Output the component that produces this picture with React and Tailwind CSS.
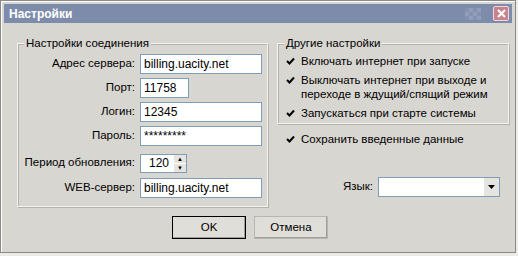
import { useState } from "react";

const font = { fontFamily: '"Liberation Sans", Arial, sans-serif' };

function Field({ label, value, w = "w-[122px]" }) {
  return (
    <div className="flex items-center h-[20px]">
      <span className="w-[122px] pr-[5px] text-right">{label}</span>
      <div className={`${w} h-[20px] bg-white border border-[#7f9db9] px-[3px] flex items-center text-[12px]`}>
        {value}
      </div>
    </div>
  );
}

function Check({ children }) {
  return (
    <div className="flex items-start gap-[4px]">
      <div className="mt-[1px] w-[13px] h-[13px] shrink-0 flex items-center justify-center">
        <svg width="9" height="9" viewBox="0 0 9 9">
          <path d="M1 4 L3.5 6.5 L8 1.5" stroke="#000" strokeWidth="2" fill="none" />
        </svg>
      </div>
      <span className="leading-[14px]">{children}</span>
    </div>
  );
}

function Group({ title, className, children }) {
  return (
    <div className={`relative border border-[#f4f3f0] shadow-[inset_1px_1px_0_#b4b2ad,1px_1px_0_#b4b2ad] ${className}`}>
      <span className="absolute -top-[8px] left-[6px] px-[2px] bg-[#d8d6d1] leading-[14px]">{title}</span>
      {children}
    </div>
  );
}

export default function App() {
  const [period] = useState(120);

  return (
    <div className="w-[518px] h-[256px] bg-[#ecebe8] text-[11.5px] text-black" style={font}>
      <div className="w-[516px] h-[253px] bg-[#d8d6d1] border border-[#8a8986] shadow-[inset_1px_1px_0_#fff] flex flex-col px-[3px] pt-[3px]">
        {/* title bar */}
        <div className="h-[19px] bg-[#7e8cab] flex items-center justify-between pl-[5px] pr-[3px]">
          <span className="text-white font-bold text-[12px]">Настройки</span>
          <div className="flex items-center gap-[12px]">
            <div className="grid grid-cols-4 gap-0 opacity-70">
              {[0, 1, 0, 1, 1, 0, 1, 0, 0, 1, 0, 1].map((v, i) => (
                <div key={i} className={`w-[4px] h-[4px] ${v ? "bg-[#9aa6c0]" : "bg-[#8794b2]"}`} />
              ))}
            </div>
            <div className="w-[16px] h-[15px] rounded-[2px] bg-[#c7848e] border border-[#f0d8dc] flex items-center justify-center">
              <svg width="9" height="9" viewBox="0 0 9 9">
                <path d="M1 1 L8 8 M8 1 L1 8" stroke="#fff" strokeWidth="2" />
              </svg>
            </div>
          </div>
        </div>

        {/* body */}
        <div className="flex gap-[9px] pl-[13px] pt-[20px]">
          <Group title="Настройки соединения" className="w-[251px] h-[164px] pt-[10px] flex flex-col gap-[4px]">
            <Field label="Адрес сервера:" value="billing.uacity.net" />
            <Field label="Порт:" value="11758" w="w-[49px]" />
            <Field label="Логин:" value="12345" />
            <Field label="Пароль:" value="*********" />
            <div className="flex items-center h-[22px] mt-[2px]">
              <span className="w-[122px] pr-[5px] text-right">Период обновления:</span>
              <div className="w-[47px] h-[19px] bg-white border border-[#7f9db9] flex items-center pl-[8px] justify-between text-[12px]">
                <span>{period}</span>
                <div className="flex flex-col w-[12px] h-[17px] gap-px">
                  <div className="flex-1 bg-[#e6e4df] flex items-center justify-center text-[6px] leading-none">▲</div>
                  <div className="flex-1 bg-[#e6e4df] flex items-center justify-center text-[6px] leading-none">▼</div>
                </div>
              </div>
            </div>
            <Field label="WEB-сервер:" value="billing.uacity.net" />
          </Group>

          <div className="flex flex-col w-[232px]">
            <Group title="Другие настройки" className="h-[81px] pt-[10px] pl-[6px] flex flex-col gap-[5px]">
              <Check>Включать интернет при запуске</Check>
              <Check>
                Выключать интернет при выходе и
                <br />
                переходе в ждущий/спящий режим
              </Check>
              <Check>Запускаться при старте системы</Check>
            </Group>
            <div className="pl-[7px] pt-[8px]">
              <Check>Сохранить введенные данные</Check>
            </div>
            <div className="flex items-center justify-end mt-[31px] pr-[9px]">
              <span className="mr-[5px]">Язык:</span>
              <div className="w-[122px] h-[20px] bg-white border border-[#7f9db9] flex justify-end">
                <div className="w-[15px] bg-[#e6e4df] flex items-center justify-center">
                  <svg width="7" height="4" viewBox="0 0 7 4"><path d="M0 0 H7 L3.5 4 Z" fill="#000" /></svg>
                </div>
              </div>
            </div>
          </div>
        </div>

        {/* buttons */}
        <div className="flex justify-center gap-[8px] mt-[9px] pr-[16px]">
          <button className="w-[74px] h-[23px] bg-[#e0ded9] border border-black shadow-[inset_-1px_-1px_0_#a09e99]">OK</button>
          <button className="w-[74px] h-[23px] bg-[#e0ded9] border border-[#b8b6b1] shadow-[inset_-1px_-1px_0_#a09e99]">Отмена</button>
        </div>
      </div>
    </div>
  );
}
